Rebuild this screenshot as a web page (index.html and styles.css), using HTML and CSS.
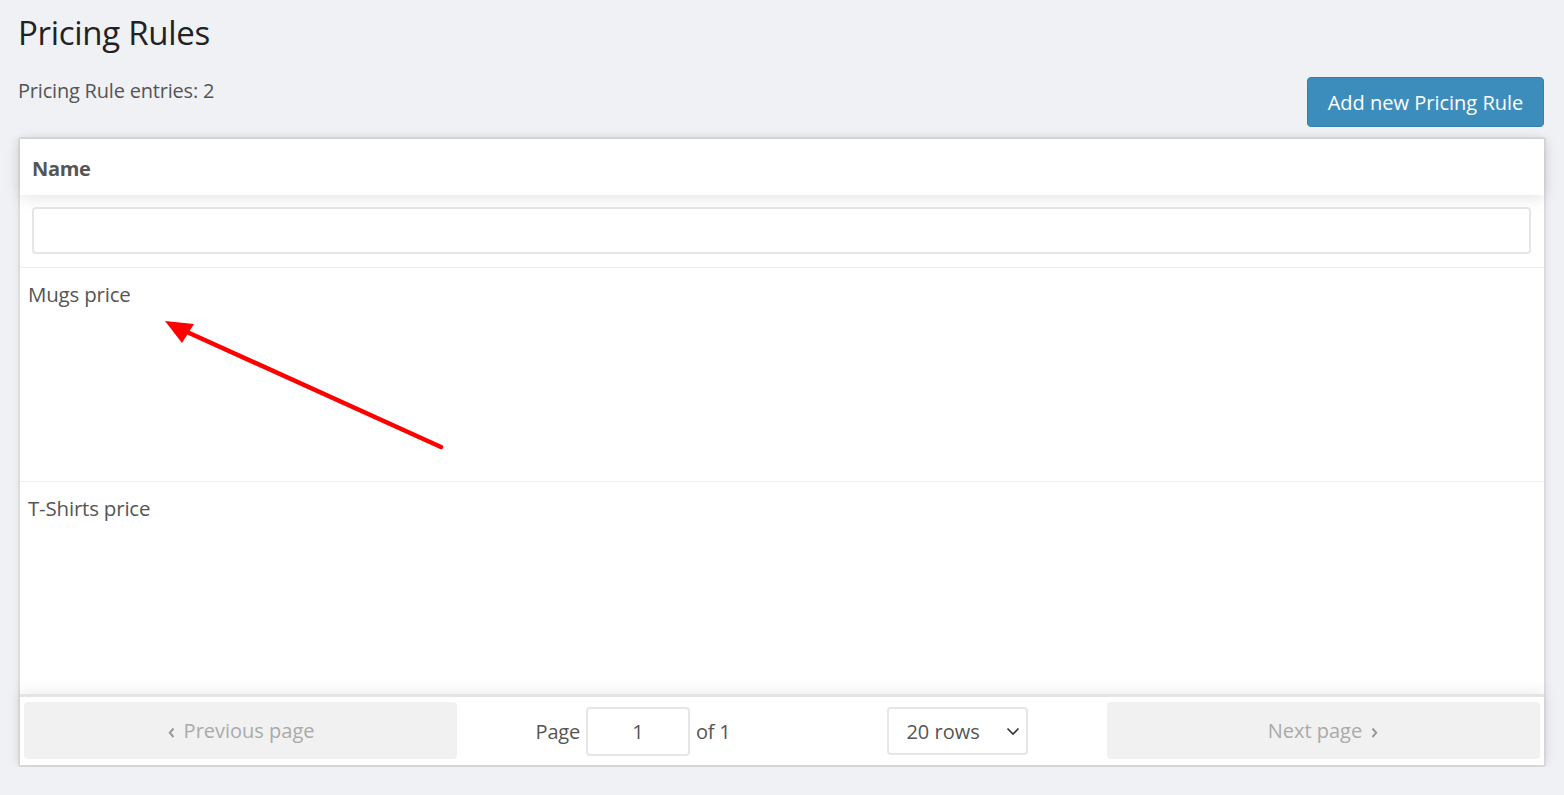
FILE: index.html
```html
<!DOCTYPE html>
<html>
<head>
<meta charset="utf-8">
<link rel="stylesheet" href="styles.css">
</head>
<body>
<div class="page">
  <h1 class="title">Pricing Rules</h1>
  <div class="toolbar">
    <div class="count">Pricing Rule entries: 2</div>
    <button class="add-btn">Add new Pricing Rule</button>
  </div>
  <div class="table">
    <div class="thead">
      <div class="th">Name</div>
    </div>
    <div class="filter-row">
      <input class="filter" type="text">
    </div>
    <div class="tbody">
      <div class="tr"><div class="td">Mugs price</div></div>
      <div class="tr"><div class="td">T-Shirts price</div></div>
    </div>
    <div class="pagination">
      <div class="pg-side"><button class="pg-btn" disabled><svg class="chev" width="9" height="13" viewBox="0 0 9 13"><path d="M6.5 2.5 L2.8 6.8 L6.5 11" fill="none" stroke="#999" stroke-width="2"/></svg>Previous page</button></div>
      <div class="pg-center">
        <span class="page-info">Page <input class="page-input" type="text" value="1"> of 1</span>
        <span class="select-wrap">
          <select class="rows-select"><option>20 rows</option></select>
          <svg class="sel-arrow" width="14" height="9" viewBox="0 0 14 9"><path d="M1.5 1.5 L7 7 L12.5 1.5" fill="none" stroke="#333" stroke-width="1.6"/></svg>
        </span>
      </div>
      <div class="pg-side"><button class="pg-btn" disabled>Next page<svg class="chev chev-r" width="9" height="13" viewBox="0 0 9 13"><path d="M2.5 2.5 L6.2 6.8 L2.5 11" fill="none" stroke="#999" stroke-width="2"/></svg></button></div>
    </div>
    <svg class="arrow" width="300" height="150" viewBox="0 0 300 150">
      <line x1="276" y1="127" x2="22" y2="12" stroke="#ff0000" stroke-width="4.5" stroke-linecap="round"/>
      <polygon points="0,1 29,4 17,23" fill="#ff0000"/>
    </svg>
  </div>
</div>
</body>
</html>
```

FILE: styles.css
```css
* { box-sizing: border-box; }
html, body { margin: 0; padding: 0; }
body {
  background: #f0f1f5;
  font-family: "Open Sans", "Noto Sans", sans-serif;
  color: #444;
}
.page {
  padding: 12px 18px 0 18px;
}
.title {
  margin: 0;
  font-weight: 400;
  font-size: 33px;
  line-height: 42px;
  color: #222;
  letter-spacing: -0.3px;
}
.toolbar {
  display: flex;
  justify-content: space-between;
  align-items: flex-start;
  margin-top: 23px;
}
.count {
  font-size: 20px;
  line-height: 30px;
  color: #555;
  margin-top: -1px;
  letter-spacing: -0.2px;
}
.add-btn {
  width: 237px;
  height: 50px;
  margin-right: 2px;
  background: #3c8dbc;
  border: 1px solid #367fa9;
  border-radius: 4px;
  color: #fff;
  font-family: inherit;
  font-size: 20px;
  padding: 0;
}
.table {
  position: relative;
  margin-top: 10px;
  border: 2px solid #dcdcdc;
  border-radius: 3px;
  background: #fff;
  box-shadow: 0 2px 8px rgba(0,0,0,0.06);
  width: 1528px;
}
.thead {
  height: 56px;
  display: flex;
  align-items: center;
  padding-left: 12px;
  padding-top: 3px;
  box-shadow: 0 2px 15px 0 rgba(0,0,0,0.12);
  position: relative;
  z-index: 1;
  background: #fff;
}
.th {
  font-weight: 700;
  font-size: 20px;
  color: #555;
  letter-spacing: -0.3px;
}
.filter-row {
  height: 73px;
  padding: 12px 13px 0 12px;
  border-bottom: 1px solid #eeeeee;
}
.filter {
  width: 100%;
  height: 47px;
  border: 2px solid #e6e6e6;
  border-radius: 4px;
  background: #fff;
  outline: none;
}
.tr {
  height: 214px;
  border-bottom: 1px solid #eeeeee;
  padding: 11px 8px;
}
.tr:last-child { border-bottom: none; height: 212px; }
.td {
  font-size: 20.5px;
  line-height: 30px;
  color: #555;
  letter-spacing: -0.2px;
}
.pagination {
  display: flex;
  padding: 5px 4px 5px 4px;
  border-top: 3px solid #e4e4e4;
  box-shadow: 0 -2px 15px 0 rgba(0,0,0,0.08);
  position: relative;
  z-index: 1;
  background: #fff;
  height: 71px;
}
.pg-side { flex: 1; display: flex; }
.pg-btn {
  width: 100%;
  height: 57px;
  border: none;
  border-radius: 4px;
  background: #f1f1f1;
  color: #aaa;
  font-family: inherit;
  font-size: 20px;
  padding: 0;
  display: flex;
  align-items: center;
  justify-content: center;
}
.chev { margin-right: 8px; margin-top: 4px; }
.chev-r { margin-right: 0; margin-left: 8px; }
.pg-center {
  flex: 1.5;
  display: flex;
  justify-content: space-around;
  align-items: center;
  font-size: 20px;
  color: #555;
}
.page-info { display: flex; align-items: center; gap: 6px; letter-spacing: -0.2px; }
.page-input {
  width: 104px;
  height: 49px;
  border: 2px solid #e6e6e6;
  border-radius: 4px;
  text-align: center;
  font-family: inherit;
  font-size: 20px;
  color: #555;
  outline: none;
}
.select-wrap { position: relative; display: inline-block; }
.rows-select {
  appearance: none;
  -webkit-appearance: none;
  width: 141px;
  height: 48px;
  border: 2px solid #e6e6e6;
  border-radius: 4px;
  background: #fff;
  font-family: inherit;
  font-size: 20px;
  color: #555;
  padding-left: 17px;
  outline: none;
}
.sel-arrow { position: absolute; right: 8px; top: 20px; pointer-events: none; }
.arrow { position: absolute; left: 145px; top: 181px; }
```
